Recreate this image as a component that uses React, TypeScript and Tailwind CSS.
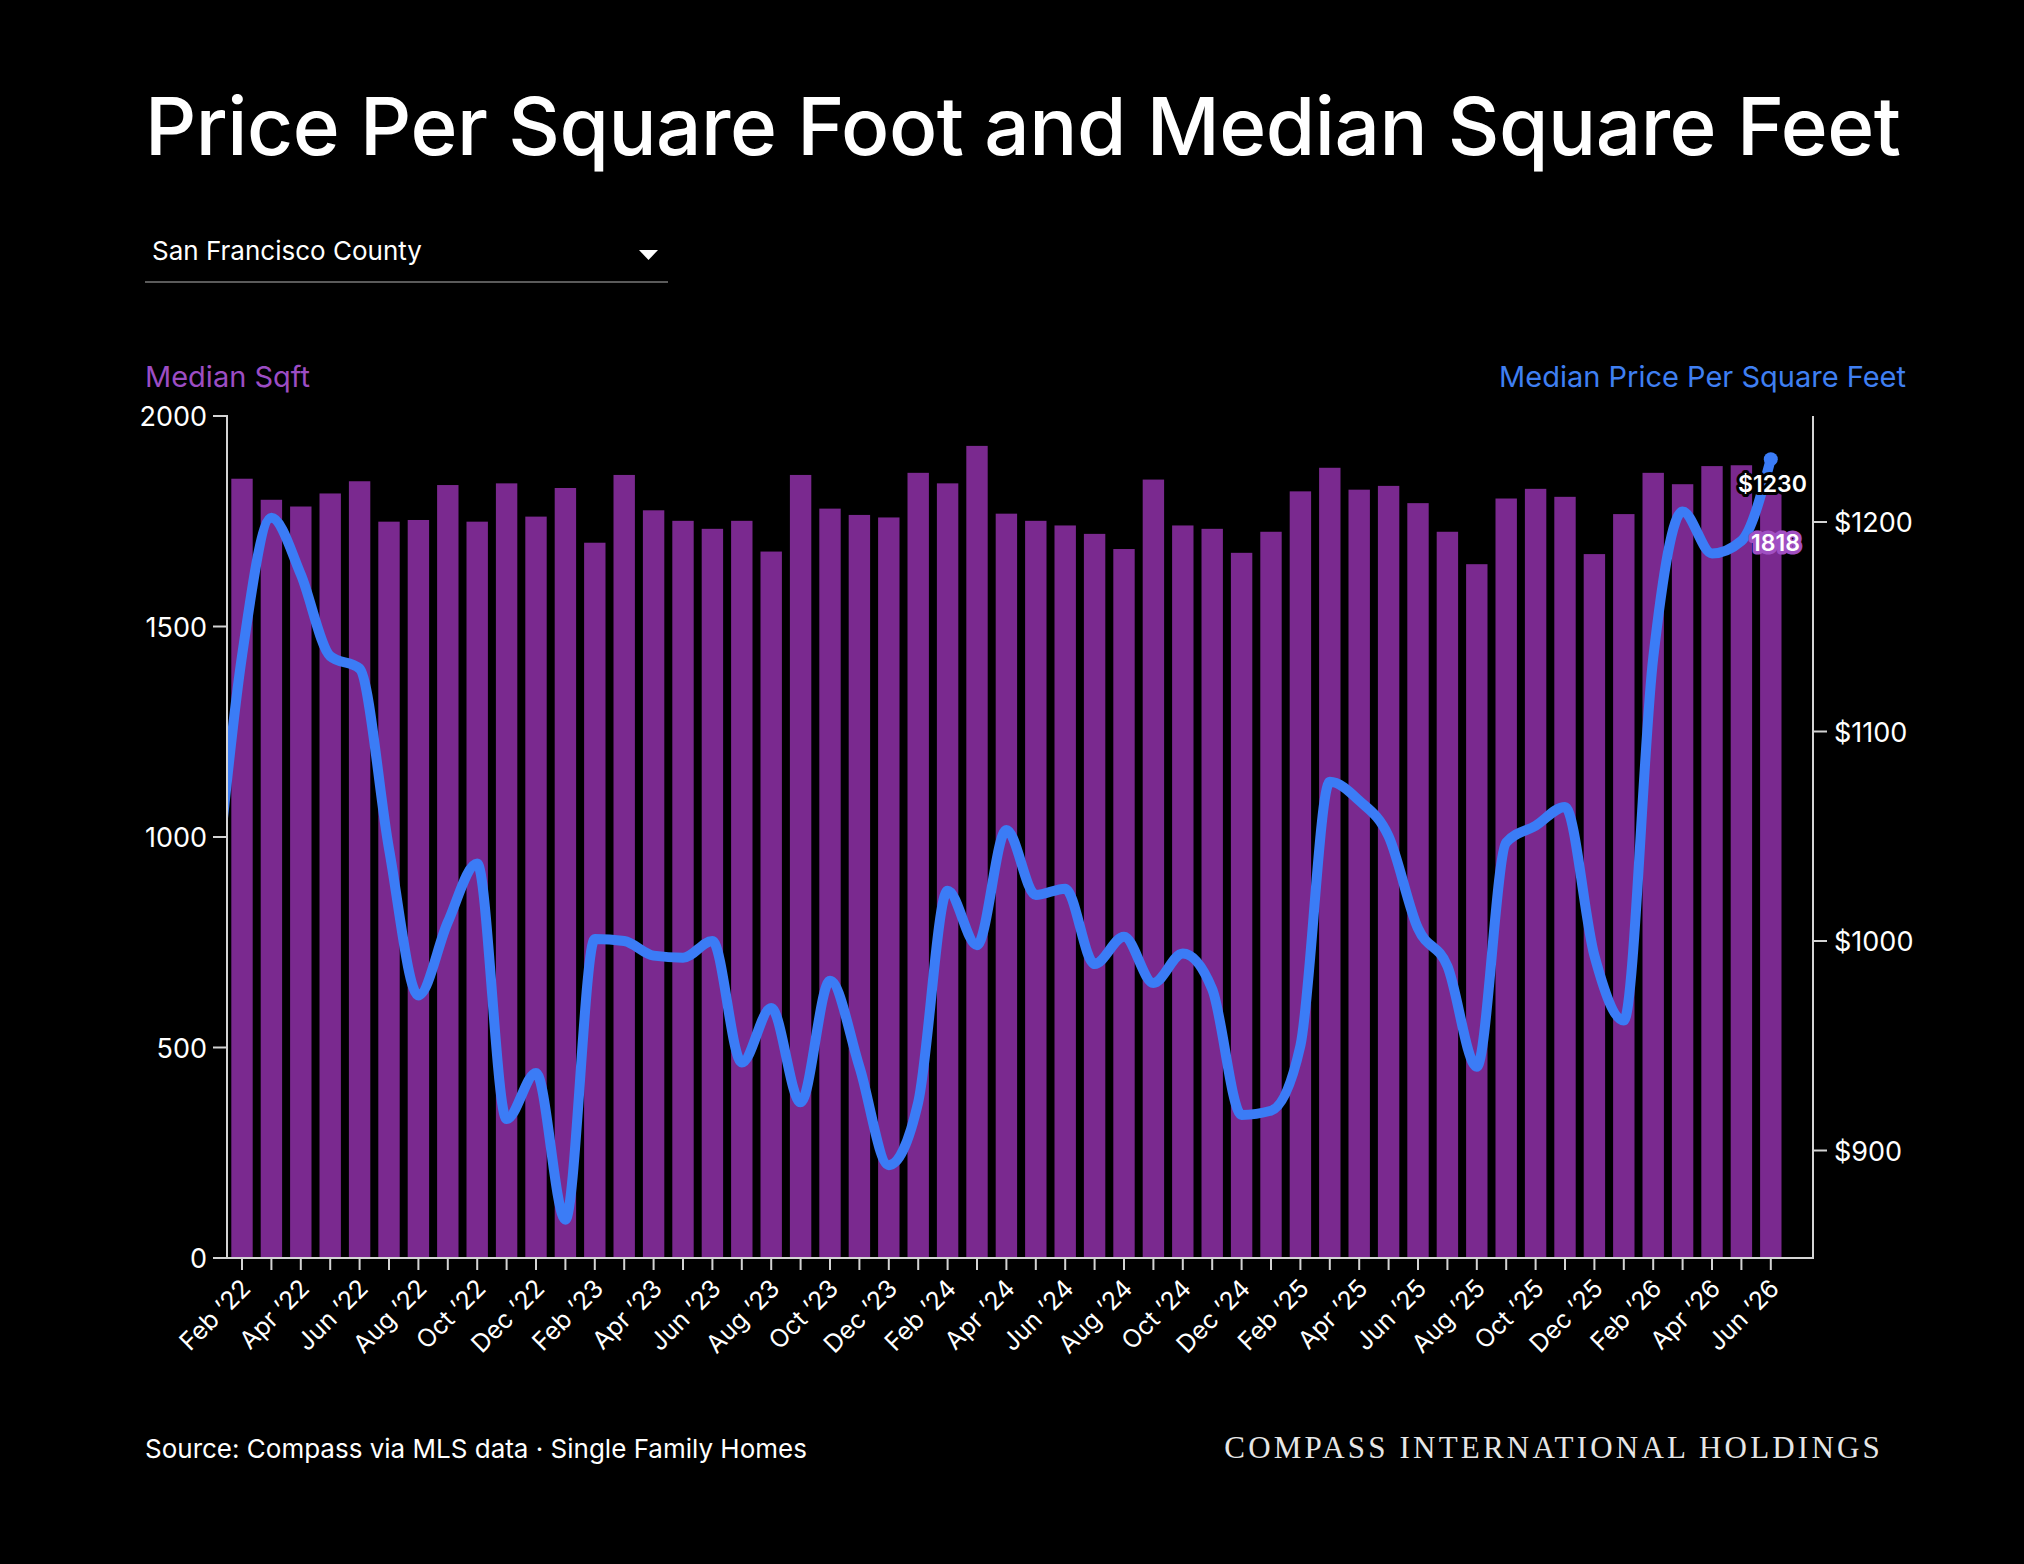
import React from "react";

const MONTHS = ["Jan", "Feb", "Mar", "Apr", "May", "Jun", "Jul", "Aug", "Sep", "Oct", "Nov", "Dec"];

// Median square feet, Feb '22 -> Jun '26
const SQFT = [
  1851, 1801, 1785, 1816, 1845, 1749, 1753, 1836, 1749, 1840, 1761, 1829, 1699, 1860, 1776, 1751,
  1732, 1751, 1678, 1860, 1780, 1765, 1759, 1865, 1840, 1929, 1768, 1751, 1740, 1720, 1684, 1849,
  1740, 1732, 1675, 1725, 1821, 1877, 1825, 1834, 1793, 1725, 1648, 1804, 1827, 1808, 1672, 1767,
  1865, 1838, 1881, 1883, 1818,
];

// Median price per square foot, same months (first value is Jan '22, clipped by the axis)
const PPSF = [
  1010, 1136, 1202, 1175, 1136, 1130, 1044, 974, 1009, 1037, 915, 937, 867, 1001, 1000, 993, 992,
  1000, 942, 968, 923, 981, 940, 893, 923, 1024, 998, 1053, 1022, 1025, 989, 1002, 980, 994, 977,
  917, 919, 950, 1076, 1067, 1050, 1006, 988, 940, 1047, 1055, 1064, 993, 962, 1135, 1205, 1185,
  1191, 1230,
];

const BAR = "#7a298f";
const LINE = "#3b7cf6";
const AXIS = "#d4d4d4";

const X0 = 242;
const STEP = 29.4;
const BOTTOM = 1258;
const cx = (i: number) => X0 + i * STEP;
const ySqft = (v: number) => BOTTOM - v * 0.421;
const yPrice = (v: number) => 522 + (1200 - v) * 2.095;

const monthLabel = (i: number) => {
  const m = 1 + i;
  return `${MONTHS[m % 12]} ’${22 + Math.floor(m / 12)}`;
};

// monotone-x cubic curve through the points
const monotonePath = (pts: [number, number][]) => {
  const n = pts.length;
  const t = new Array(n).fill(0);
  const sign = (x: number) => (x < 0 ? -1 : 1);
  for (let i = 1; i < n - 1; i++) {
    const [x0, y0] = pts[i - 1];
    const [x1, y1] = pts[i];
    const [x2, y2] = pts[i + 1];
    const h0 = x1 - x0;
    const h1 = x2 - x1;
    const s0 = (y1 - y0) / h0;
    const s1 = (y2 - y1) / h1;
    const p = (s0 * h1 + s1 * h0) / (h0 + h1);
    t[i] = (sign(s0) + sign(s1)) * Math.min(Math.abs(s0), Math.abs(s1), 0.5 * Math.abs(p)) || 0;
  }
  const slope2 = (a: number, b: number, tt: number) => {
    const h = pts[b][0] - pts[a][0];
    return h ? ((3 * (pts[b][1] - pts[a][1])) / h - tt) / 2 : tt;
  };
  t[0] = slope2(0, 1, t[1]);
  t[n - 1] = slope2(n - 2, n - 1, t[n - 2]);
  let d = `M${pts[0][0]},${pts[0][1]}`;
  for (let i = 0; i < n - 1; i++) {
    const [x0, y0] = pts[i];
    const [x1, y1] = pts[i + 1];
    const dx = (x1 - x0) / 3;
    d += ` C${x0 + dx},${y0 + dx * t[i]} ${x1 - dx},${y1 - dx * t[i + 1]} ${x1},${y1}`;
  }
  return d;
};

const Chart = () => {
  const linePts = PPSF.map((v, k) => [cx(k - 1), yPrice(v)] as [number, number]);
  const last = SQFT.length - 1;

  return (
    <svg width={1761} height={980} viewBox="145 400 1761 980" className="mt-[9px] block overflow-visible">
      <defs>
        <clipPath id="plot">
          <rect x={228} y={380} width={1585} height={878} />
        </clipPath>
      </defs>

      {/* Bars */}
      {SQFT.map((v, i) => (
        <rect key={i} x={cx(i) - 10.7} y={ySqft(v)} width={21.4} height={v * 0.421} fill={BAR} />
      ))}

      {/* Axes */}
      <g stroke={AXIS} strokeWidth={2} fill="none">
        <path d={`M213,416 H227 V${BOTTOM} H1813 V416`} />
        {[0, 500, 1000, 1500].map((v) => (
          <line key={v} x1={213} x2={227} y1={ySqft(v)} y2={ySqft(v)} />
        ))}
        {[1200, 1100, 1000, 900].map((v) => (
          <line key={v} x1={1813} x2={1827} y1={yPrice(v)} y2={yPrice(v)} />
        ))}
        {SQFT.map((_, i) => (
          <line key={i} x1={cx(i)} x2={cx(i)} y1={BOTTOM} y2={BOTTOM + 12} />
        ))}
      </g>

      <g fill="#fff" fontSize={27}>
        {[0, 500, 1000, 1500, 2000].map((v) => (
          <text key={v} x={207} y={ySqft(v) + 10} textAnchor="end">
            {v}
          </text>
        ))}
        {[1200, 1100, 1000, 900].map((v) => (
          <text key={v} x={1834} y={yPrice(v) + 10}>
            ${v}
          </text>
        ))}
      </g>

      {/* Month labels */}
      <g fill="#fff" fontSize={25}>
        {SQFT.map((_, i) =>
          i % 2 === 0 ? (
            <text
              key={i}
              textAnchor="end"
              transform={`translate(${cx(i) + 10} ${BOTTOM + 32}) rotate(-45)`}
            >
              {monthLabel(i)}
            </text>
          ) : null
        )}
      </g>

      {/* Price line */}
      <path
        d={monotonePath(linePts)}
        fill="none"
        stroke={LINE}
        strokeWidth={10}
        strokeLinejoin="round"
        strokeLinecap="round"
        clipPath="url(#plot)"
      />
      <circle cx={cx(last)} cy={yPrice(1230)} r={7} fill={LINE} />

      {/* End labels */}
      <g fontSize={23} fontWeight={600} paintOrder="stroke" strokeLinejoin="round">
        <text x={1738} y={492} fill="#fff" stroke="#000" strokeWidth={6}>
          $1230
        </text>
        <text x={1751} y={551} fill="#fff" stroke="#a04fc2" strokeWidth={7}>
          {SQFT[last]}
        </text>
      </g>
    </svg>
  );
};

const App = () => {
  return (
    <div className="flex h-[1564px] w-[2024px] flex-col bg-black pl-[145px] pr-[118px] font-['Inter',sans-serif] text-white">
      {/* Title */}
      <h1 className="mt-[86px] text-[80px] font-medium leading-none tracking-[-0.006em] whitespace-nowrap">
        Price Per Square Foot and Median Square Feet
      </h1>

      {/* Region select */}
      <div className="mt-[72px] flex w-[523px] items-center justify-between border-b-2 border-[#5a5a5a] pb-[17px] pl-[7px] pr-[10px]">
        <span className="text-[26px] leading-none">San Francisco County</span>
        <svg width="19" height="10" viewBox="0 0 19 10" className="mt-[8px]">
          <polygon points="0,0 19,0 9.5,10" fill="#fff" />
        </svg>
      </div>

      {/* Legend */}
      <div className="mt-[79px] flex justify-between text-[29px] leading-none">
        <span className="text-[#9c4dc4]">Median Sqft</span>
        <span className="text-[#3f7ff2]">Median Price Per Square Feet</span>
      </div>

      <Chart />

      {/* Footer */}
      <div className="mt-[52px] flex items-baseline justify-between pr-[23px]">
        <span className="text-[26px] leading-none">Source: Compass via MLS data · Single Family Homes</span>
        <span className="font-['Liberation_Serif',serif] text-[31px] leading-none tracking-[3.2px] text-[#e6e6e6]">
          COMPASS INTERNATIONAL HOLDINGS
        </span>
      </div>
    </div>
  );
};

export default App;
